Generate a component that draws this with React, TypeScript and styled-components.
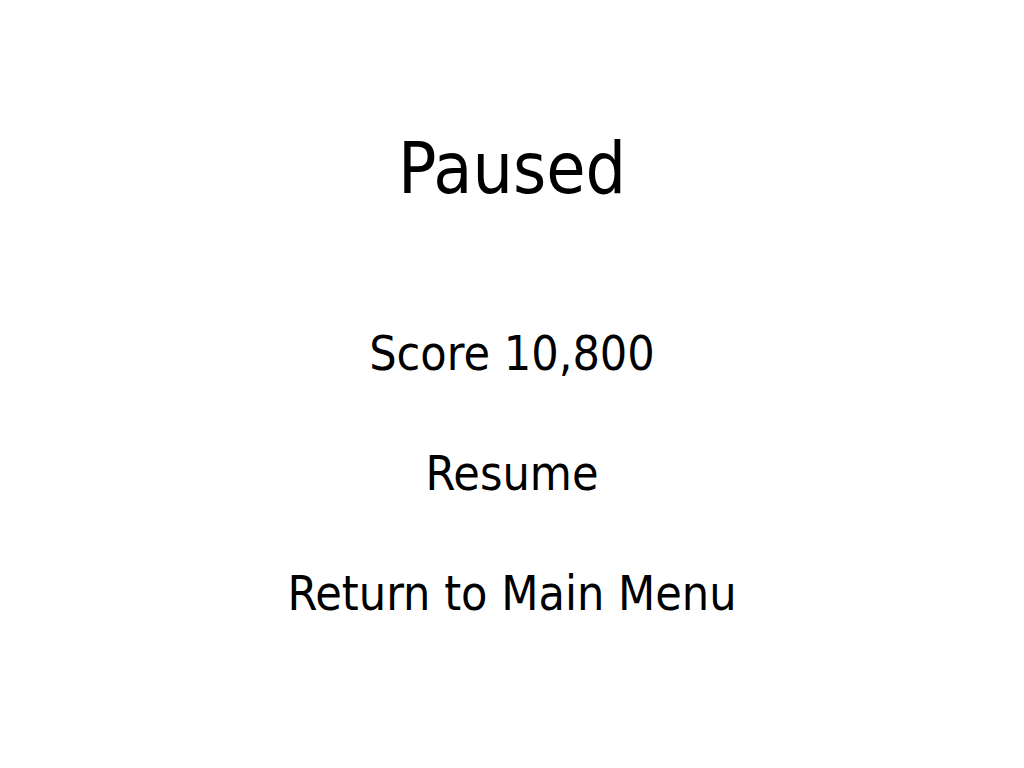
import React from 'react';
import styled, { createGlobalStyle } from 'styled-components';

const GlobalStyle = createGlobalStyle`
  html,
  body {
    margin: 0;
    padding: 0;
    background-color: #ffffff;
  }
`;

const Container = styled.div`
  display: flex;
  flex-direction: column;
  align-items: center;
  width: 100%;
  height: 100vh;
  padding-top: 133px;
  box-sizing: border-box;
  font-family: 'DejaVu Sans Condensed', 'DejaVu Sans', sans-serif;
  font-stretch: semi-condensed;
  color: #000000;
`;
const Title = styled.h1`
  margin: 0;
  font-size: 71px;
  font-weight: 400;
  line-height: 1;
`;
const MenuList = styled.ul`
  display: flex;
  flex-direction: column;
  align-items: center;
  gap: 72px;
  margin: 125px 0 0;
  padding: 0;
  list-style: none;
`;
const MenuItem = styled.li`
  font-size: 48px;
  line-height: 1;
`;
const MenuBtn = styled.button`
  padding: 0;
  border: none;
  background: none;
  font: inherit;
  color: inherit;
  cursor: pointer;
`;

const PausePage = () => {
  const onResume = () => {};
  const onMainMenu = () => {};

  return (
    <Container>
      <GlobalStyle />
      <Title>Paused</Title>
      <MenuList>
        <MenuItem>Score 10,800</MenuItem>
        <MenuItem>
          <MenuBtn onClick={onResume}>Resume</MenuBtn>
        </MenuItem>
        <MenuItem>
          <MenuBtn onClick={onMainMenu}>Return to Main Menu</MenuBtn>
        </MenuItem>
      </MenuList>
    </Container>
  );
};

export default PausePage;
